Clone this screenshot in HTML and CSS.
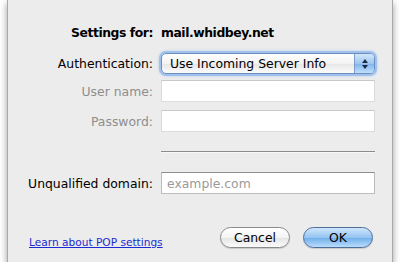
FILE: index.html
```html
<!DOCTYPE html>
<html lang="en">
<head>
    <meta charset="UTF-8">
    <title>Settings for mail.whidbey.net</title>
    <link rel="stylesheet" href="styles.css">
</head>
<body>
    <div class="sheet">
        <div class="row title-row">
            <div class="label">Settings for:</div>
            <div class="control">mail.whidbey.net</div>
        </div>

        <div class="row auth-row">
            <div class="label">Authentication:</div>
            <div class="control popup">
                <span class="popup-text">Use Incoming Server Info</span>
                <span class="popup-arrows">
                    <svg width="8" height="12" viewBox="0 0 8 12">
                        <path d="M4 1 L7 5 L1 5 Z" fill="#1c2a44"/>
                        <path d="M4 11 L7 7 L1 7 Z" fill="#1c2a44"/>
                    </svg>
                </span>
            </div>
        </div>

        <div class="row user-row">
            <div class="label disabled">User name:</div>
            <div class="control field field-disabled"></div>
        </div>

        <div class="row pass-row">
            <div class="label disabled">Password:</div>
            <div class="control field field-disabled"></div>
        </div>

        <div class="row sep-row">
            <div class="label"></div>
            <div class="control separator"></div>
        </div>

        <div class="row domain-row">
            <div class="label">Unqualified domain:</div>
            <div class="control field"><span class="placeholder">example.com</span></div>
        </div>

        <div class="footer">
            <a class="help-link" href="#">Learn about POP settings</a>
            <div class="buttons">
                <button class="btn cancel-btn">Cancel</button>
                <button class="btn ok-btn">OK</button>
            </div>
        </div>
    </div>
</body>
</html>
```

FILE: styles.css
```css
body {
    margin: 0;
    background: #ffffff;
    font-family: "DejaVu Sans", "Lucida Grande", sans-serif;
    font-size: 12.4px;
    color: #000000;
}
.sheet {
    margin-left: 7px;
    width: 386px;
    height: 262px;
    padding-top: 24px;
    box-sizing: border-box;
    background: #ececec;
    border-left: 1px solid #a9a9a9;
    border-right: 1px solid #a9a9a9;
    box-shadow: 0 3px 7px rgba(0, 0, 0, 0.4);
}
.row {
    display: flex;
    align-items: center;
    gap: 8px;
}
.label {
    width: 145px;
    text-align: right;
    white-space: nowrap;
}
.control {
    width: 214px;
    box-sizing: border-box;
}
.disabled {
    color: #8e8e8e;
}
.title-row {
    height: 16px;
    font-weight: bold;
    letter-spacing: -0.45px;
}
.auth-row {
    margin-top: 13px;
}
.user-row {
    margin-top: 6px;
}
.pass-row {
    margin-top: 8px;
}
.sep-row {
    margin-top: 19px;
}
.domain-row {
    margin-top: 19px;
}
.popup {
    height: 21px;
    display: flex;
    align-items: center;
    border: 1px solid #6d8fc0;
    border-radius: 5px;
    background: linear-gradient(#ffffff, #f2f2f2 50%, #e6e6e6 51%, #fbfbfb);
    box-shadow: 0 0 0 2px #9fc1ec, 0 0 3px 2px #b6d2f2;
    overflow: hidden;
}
.popup-text {
    flex: 1;
    padding-left: 8px;
}
.popup-arrows {
    width: 19px;
    height: 100%;
    display: flex;
    align-items: center;
    justify-content: center;
    border-left: 1px solid #7d9cc6;
    background: linear-gradient(#d2e6fb, #9dc6f1 50%, #7fb3ec 51%, #bfe0fc);
}
.field {
    height: 22px;
    background: #ffffff;
    border: 1px solid #bdbdbd;
    border-top-color: #8f8f8f;
    padding-left: 5px;
    display: flex;
    align-items: center;
}
.field-disabled {
    border-color: #dcdcdc;
    border-top-color: #c8c8c8;
}
.placeholder {
    color: #9a9a9a;
}
.separator {
    height: 1px;
    background: #8c8c8c;
    border-bottom: 1px solid #f8f8f8;
    box-sizing: content-box;
}
.footer {
    margin-top: 33px;
    display: flex;
    align-items: center;
    justify-content: space-between;
    padding-left: 21px;
    padding-right: 19px;
}
.help-link {
    color: #1b2bd1;
    font-size: 10.6px;
    text-decoration: underline;
    margin-top: 9px;
}
.buttons {
    display: flex;
    gap: 13px;
}
.btn {
    width: 70px;
    height: 21px;
    border-radius: 11px;
    font-family: "DejaVu Sans", "Lucida Grande", sans-serif;
    font-size: 12.4px;
    color: #000000;
    padding: 0;
}
.cancel-btn {
    border: 1px solid #8a8a8a;
    background: linear-gradient(#ffffff, #f3f3f3 50%, #e4e4e4 51%, #fafafa);
    box-shadow: 0 1px 1px rgba(0, 0, 0, 0.15);
}
.ok-btn {
    border: 1px solid #4e6e9a;
    background: linear-gradient(#cfe6fb, #94c4f1 50%, #6eaeea 51%, #b9dcfb);
    box-shadow: 0 1px 1px rgba(0, 0, 0, 0.15);
}
```
